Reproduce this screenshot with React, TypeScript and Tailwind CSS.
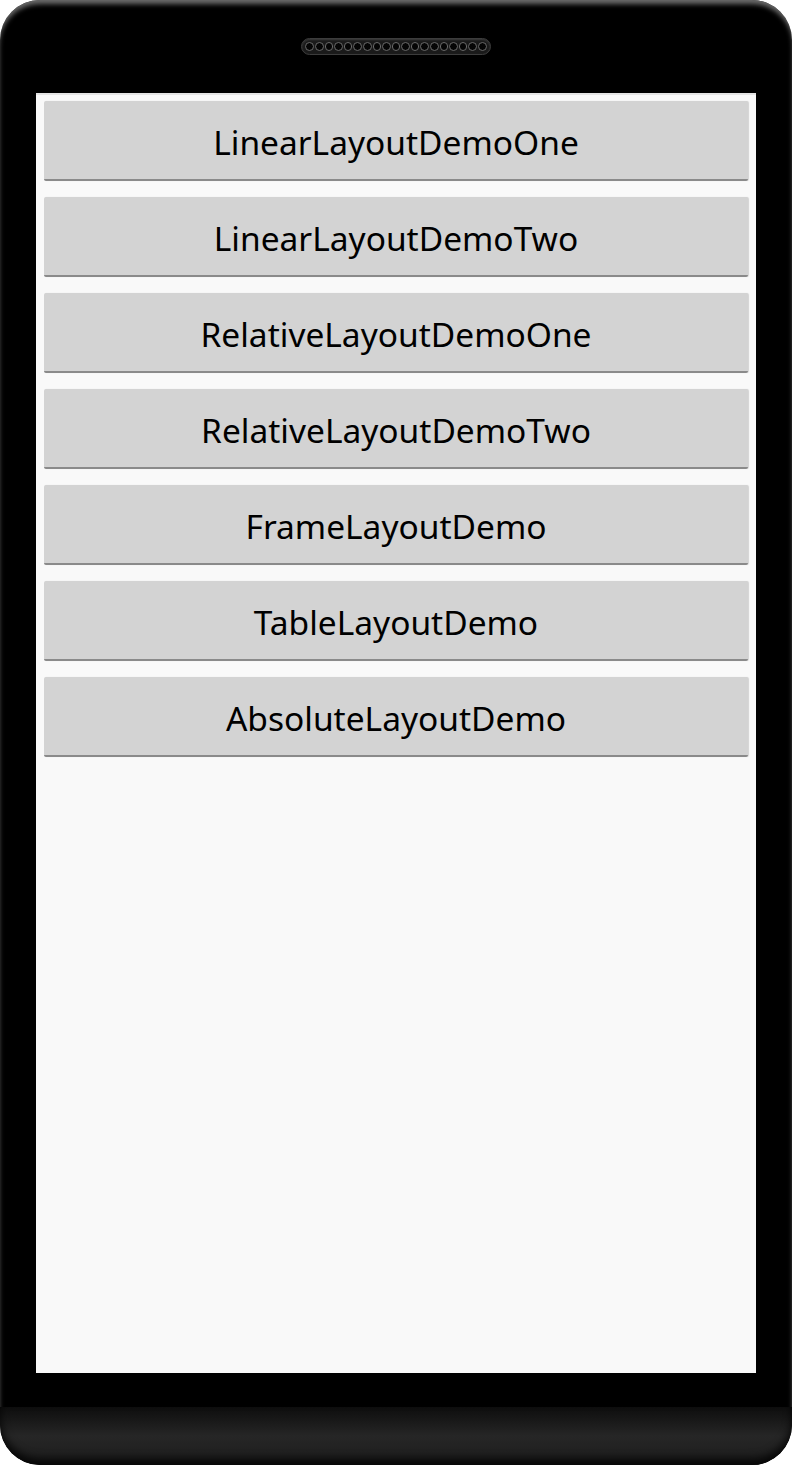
import React from 'react';

const demos = [
  'LinearLayoutDemoOne',
  'LinearLayoutDemoTwo',
  'RelativeLayoutDemoOne',
  'RelativeLayoutDemoTwo',
  'FrameLayoutDemo',
  'TableLayoutDemo',
  'AbsoluteLayoutDemo',
];

const Speaker: React.FC = () => (
  <div className="flex items-center gap-[1px] h-[17px] px-[3px] rounded-full bg-[#1a1a1a] border border-[#3c3c3c] shadow-[inset_0_1px_2px_rgba(255,255,255,0.15)]">
    {Array.from({ length: 19 }).map((_, i) => (
      <span key={i} className="block w-[8.6px] h-[8.6px] rounded-full border border-[#6a6a6a] bg-[#050505]" />
    ))}
  </div>
);

export default function App() {
  return (
    <div className="w-[792px] h-[1465px] bg-white" style={{ fontFamily: '"Noto Sans", "DejaVu Sans", sans-serif' }}>
      <div className="w-full h-full rounded-[40px] bg-black overflow-hidden flex flex-col shadow-[inset_0_5px_5px_-1px_rgba(120,120,120,0.9)]">
        <div className="h-[93px] flex justify-center pt-[38px] shrink-0">
          <Speaker />
        </div>
        <div className="px-[36px] shrink-0">
          <div className="h-[1280px] bg-[#f9f9f9] border-t-2 border-[#e4e4e4] flex flex-col gap-4 px-2 pt-[6px]">
            {demos.map((name) => (
              <button
                key={name}
                className="h-[80px] w-full bg-[#d3d3d3] border-b-2 border-[#8a8a8a] shadow-[1px_0_1px_rgba(0,0,0,0.15)] rounded-[2px] text-[33.5px] text-black flex items-center justify-center pt-1"
              >
                {name}
              </button>
            ))}
          </div>
        </div>
        <div className="h-[34px] shrink-0" />
        <div className="flex-1 bg-gradient-to-b from-[#0e0e0e] via-[#262626] to-[#1c1c1c] rounded-b-[40px] shadow-[inset_0_-6px_8px_rgba(0,0,0,0.8)]" />
      </div>
    </div>
  );
}
